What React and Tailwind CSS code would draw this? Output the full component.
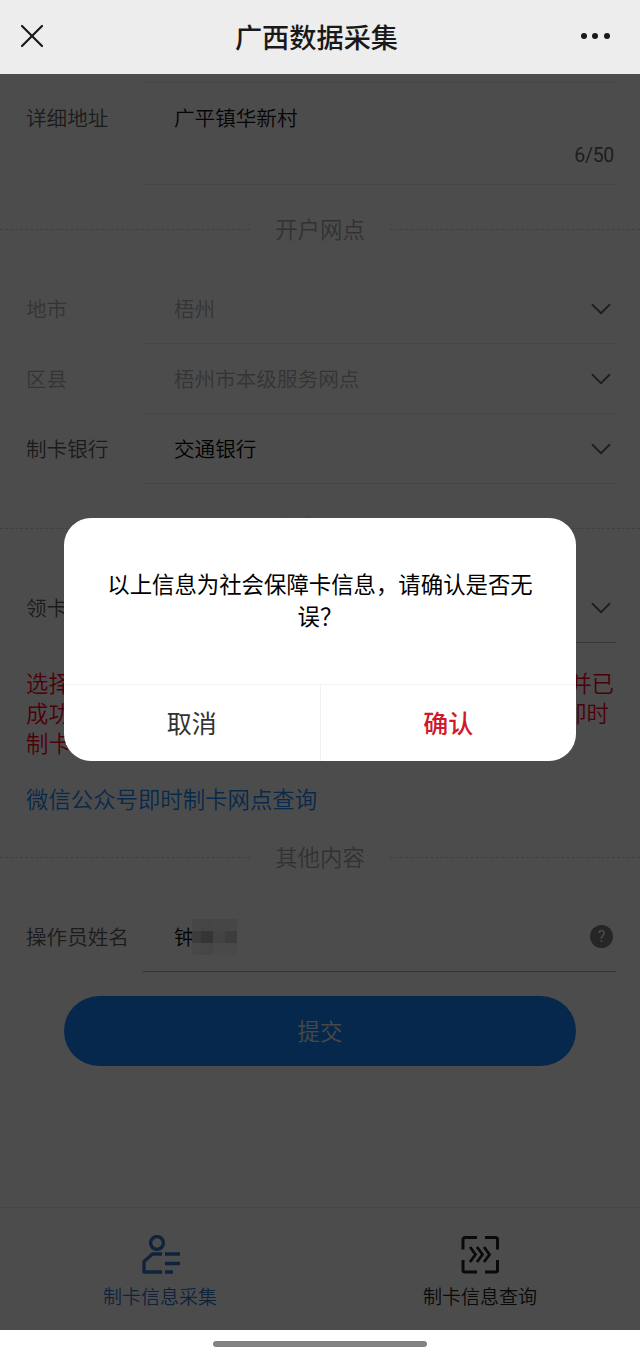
import { ChevronDown, X } from 'lucide-react'

const MOSAIC = [
  'bg-[#e9e9e9]', 'bg-[#e6e6e6]', 'bg-[#ececec]', 'bg-[#ececec]',
  'bg-[#c8c8c8]', 'bg-[#b2b2b2]', 'bg-[#e0e0e0]', 'bg-[#cccccc]',
  'bg-[#f2f2f2]', 'bg-[#eaeaea]', 'bg-[#f6f6f6]', 'bg-[#f6f6f6]',
]

function Section({ title }) {
  return (
    <div className="flex h-[89px] shrink-0 items-center text-[22.4px] text-[#a8a8a8]">
      <div className="h-px w-[250px] border-t border-dashed border-[#d4d4d4]" />
      <div className="flex-1 pb-1 text-center leading-[30px]">{title}</div>
      <div className="h-px w-[250px] border-t border-dashed border-[#d4d4d4]" />
    </div>
  )
}

function Row({ label, children, muted, line = 'border-[#e6e6e6]', arrow = true }) {
  return (
    <div className={`flex h-[70px] shrink-0 pl-[26px] pr-6 ${muted ? 'text-[#b0b0b0]' : 'text-black'}`}>
      <div className={`flex w-[117px] items-center whitespace-nowrap pb-px ${muted ? '' : 'text-[#5c5c5c]'}`}>{label}</div>
      <div className={`flex flex-1 items-center border-b pl-[31px] ${line}`}>
        {children}
        {arrow && <ChevronDown className="-mr-0.5 ml-auto text-[#666]" size={34} strokeWidth={1.3} />}
      </div>
    </div>
  )
}

function CollectIcon() {
  return (
    <svg width="40" height="40" viewBox="0 0 40 40" fill="none" stroke="currentColor" strokeWidth="3.4">
      <circle cx="17" cy="8" r="6.4" />
      <path d="M22 19H12.500L4 26.500V37h18" strokeLinejoin="round" />
      <path d="M25 19h15M25 28.500h15M25 37h8" />
    </svg>
  )
}

function QueryIcon() {
  return (
    <svg width="40" height="40" viewBox="0 0 40 40" fill="none" stroke="currentColor" strokeWidth="3">
      <path d="M3 14.500V4.500a2 2 0 0 1 2-2H17M25 2.500h10.500a2 2 0 0 1 2 2v10M37.500 25v10a2 2 0 0 1-2 2H25M17 37H5a2 2 0 0 1-2-2V25" />
      <path d="M10 12l5.500 7.500-5.500 7.500M17 12l5.500 7.500-5.500 7.500M24 12l5.500 7.500-5.500 7.500" strokeWidth="2.8" />
    </svg>
  )
}

export default function App() {
  return (
    <div className="flex h-[1359px] w-[640px] flex-col overflow-hidden bg-white font-['Noto_Sans_CJK_SC',sans-serif] text-[20.6px] font-[350]">
      <header className="flex h-[74px] shrink-0 items-center justify-between bg-[#ededed] px-[12px] pb-[2px] text-[#191919]">
        <X size={40} strokeWidth={1.3} />
        <h1 className="text-[27.2px] font-medium">广西数据采集</h1>
        <div className="mr-[18px] flex gap-[5.500px]">
          <span className="size-[6px] rounded-full bg-[#191919]" />
          <span className="size-[6px] rounded-full bg-[#191919]" />
          <span className="size-[6px] rounded-full bg-[#191919]" />
        </div>
      </header>

      <main className="relative flex flex-1 flex-col">
        <div className="mt-2 flex h-[103px] shrink-0 pl-[26px] pr-6">
          <div className="w-[117px] pt-[20px] leading-[30px] text-[#5c5c5c]">详细地址</div>
          <div className="flex-1 border-y border-[#e6e6e6] pl-[31px] pt-[19px]">
            <p className="leading-[30px] text-[#111]">广平镇华新村</p>
            <p className="mt-[9px] pr-0.5 text-right font-[Roboto,sans-serif] text-[19.500px] font-normal leading-[30px] tracking-[-0.3px] text-[#666]">6/50</p>
          </div>
        </div>

        <Section title="开户网点" />
        <Row label="地市" muted>梧州</Row>
        <Row label="区县" muted>梧州市本级服务网点</Row>
        <Row label="制卡银行">交通银行</Row>

        <Section title="领卡网点" />
        <Row label="领卡" line="border-[#b8b8b8]" />
        <div className="mt-[24px] px-[26px] text-[22.4px] leading-[30px] text-[#ff0018]">
          <div className="flex justify-between"><span>选择</span><span>并已</span></div>
          <div className="flex justify-between pr-[5px]"><span>成功</span><span>即时</span></div>
          <div>制卡</div>
        </div>
        <a className="mt-[26px] px-[26px] text-[22.4px] leading-[30px] text-[#1989fa]">微信公众号即时制卡网点查询</a>

        <Section title="其他内容" />
        <Row label="操作员姓名" line="border-[#aaa]" arrow={false}>
          <span className="whitespace-nowrap">钟</span>
          <div className="-ml-[3px] grid grid-cols-[9px_12px_12px_12px] grid-rows-[12px_12px_12px]">
            {MOSAIC.map((color, i) => <span key={i} className={color} />)}
          </div>
          <span className="ml-auto mr-[3px] flex size-[23px] items-center justify-center rounded-full bg-[#808080] font-[Roboto,sans-serif] text-base font-normal text-white">?</span>
        </Row>
        <button className="mx-16 mt-6 h-[70px] shrink-0 rounded-full bg-[#1186ff] pb-px text-[22.4px] text-[#f0f0f0]">提交</button>

        <nav className="mt-auto flex h-[123px] shrink-0 border-t border-[#ebebeb] text-[19px]">
          <div className="flex flex-1 flex-col items-center pt-[27px] text-[#3478c8]">
            <CollectIcon />
            <span className="mt-[7px] leading-[28px]">制卡信息采集</span>
          </div>
          <div className="flex flex-1 flex-col items-center pt-[27px] text-[#222]">
            <QueryIcon />
            <span className="mt-[7px] leading-[28px]">制卡信息查询</span>
          </div>
        </nav>

        {/* confirm dialog over the dimmed form */}
        <div className="absolute inset-0 flex flex-col items-center bg-black/70 pt-[444px]">
          <div className="flex h-[243px] w-[512px] flex-col rounded-[27px] bg-white">
            <p className="flex-1 px-10 pt-[49px] text-center text-[22.4px] font-normal leading-[32px] text-black">
              以上信息为社会保障卡信息，请确认是否无<br />误？
            </p>
            <div className="flex h-[77px] border-t border-[#f3f3f3] text-[25px]">
              <button className="flex-1 border-r border-[#f0f0f0] font-normal text-[#323233]">取消</button>
              <button className="flex-1 font-medium text-[#d0182d]">确认</button>
            </div>
          </div>
        </div>
      </main>

      <footer className="flex h-[29px] shrink-0 justify-center pt-[11px]">
        <div className="h-[6px] w-[214px] rounded-full bg-[#828282]" />
      </footer>
    </div>
  )
}
